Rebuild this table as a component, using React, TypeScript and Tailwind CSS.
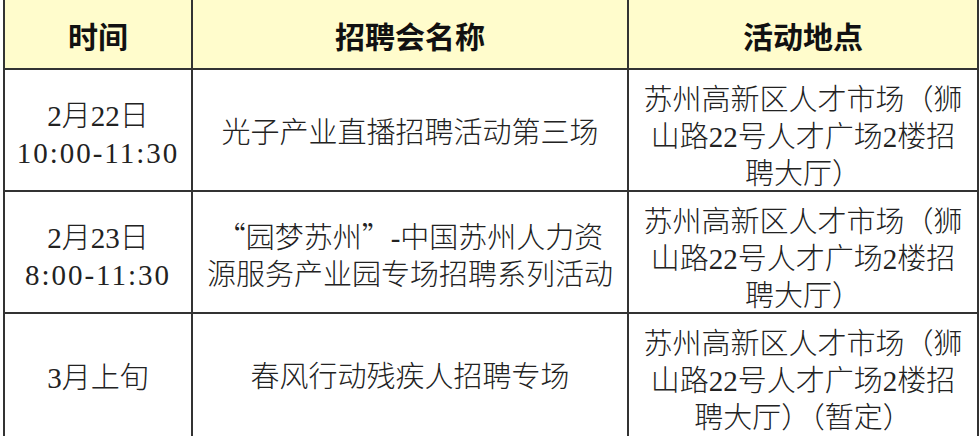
const rows = [
  {
    time: ['2月22日', '10:00-11:30'],
    name: ['光子产业直播招聘活动第三场'],
    place: ['苏州高新区人才市场（狮', '山路22号人才广场2楼招', '聘大厅）'],
  },
  {
    time: ['2月23日', '8:00-11:30'],
    name: ['“园梦苏州”-中国苏州人力资', '源服务产业园专场招聘系列活动'],
    place: ['苏州高新区人才市场（狮', '山路22号人才广场2楼招', '聘大厅）'],
  },
  {
    time: ['3月上旬'],
    name: ['春风行动残疾人招聘专场'],
    place: ['苏州高新区人才市场（狮', '山路22号人才广场2楼招', '聘大厅）（暂定）'],
  },
]

// quotes in the CJK face so they come out full-width like the source table
const Line = ({ text }: { text: string }) => {
  const parts = text.split(/([“”])/)
  return (
    <div className={`whitespace-nowrap ${text.includes(':') ? 'tracking-[2px]' : ''}`}>
      {parts.map((p, i) =>
        p === '“' || p === '”' ? (
          <span key={i} className="font-['Noto_Sans_CJK_SC',sans-serif]">
            {p}
          </span>
        ) : (
          p
        )
      )}
    </div>
  )
}

const Lines = ({ lines }: { lines: string[] }) => (
  <div className="text-center">
    {lines.map((l, i) => (
      <Line key={i} text={l} />
    ))}
  </div>
)

export default function App() {
  return (
    <div lang="zh-CN" className="w-[979px] h-[436px] bg-white overflow-hidden">
      <div className="ml-[3px] w-[976px] border-l-2 border-r-2 border-b-2 border-[#333]">
        <div className="grid grid-cols-[188px_436px_348px] h-[70px] border-b-2 border-[#333] bg-[#fffccc] text-[30px] font-bold text-[#111] font-['Liberation_Sans','Noto_Sans_CJK_SC',sans-serif]">
          <div className="flex items-center justify-center border-r-2 border-[#333] pt-[6px]">时间</div>
          <div className="flex items-center justify-center border-r-2 border-[#333] pt-[6px]">招聘会名称</div>
          <div className="flex items-center justify-center pt-[6px]">活动地点</div>
        </div>
        {rows.map((r, i) => (
          <div
            key={i}
            className={`grid grid-cols-[188px_436px_348px] h-[122px] text-[29px] leading-[37px] font-light text-[#222] font-['Liberation_Serif','Noto_Sans_CJK_SC',serif] ${
              i < rows.length - 1 ? 'border-b-2 border-[#333]' : ''
            }`}
          >
            <div className="flex items-center justify-center border-r-2 border-[#333] pt-[6px]">
              <Lines lines={r.time} />
            </div>
            <div className="flex items-center justify-center border-r-2 border-[#333] pt-[4px]">
              <Lines lines={r.name} />
            </div>
            <div className="flex items-center justify-center pt-[12px]">
              <Lines lines={r.place} />
            </div>
          </div>
        ))}
      </div>
    </div>
  )
}
